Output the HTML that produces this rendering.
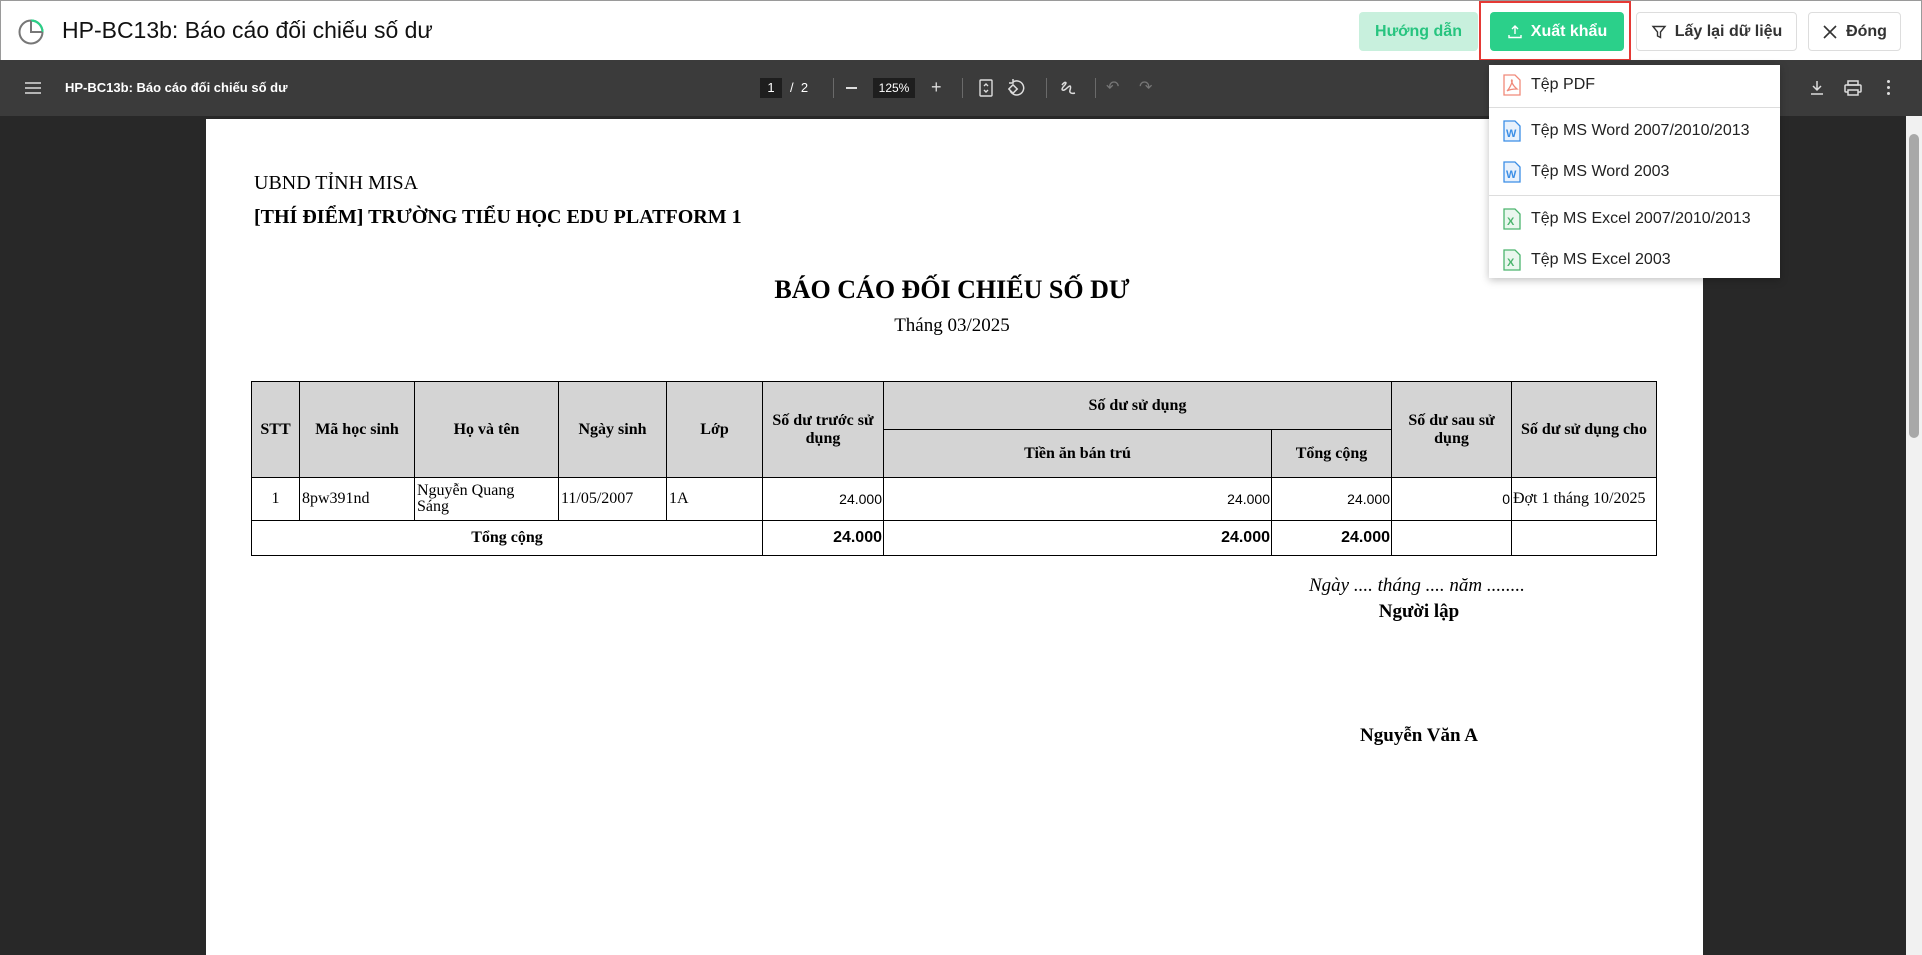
<!DOCTYPE html>
<html><head><meta charset="utf-8">
<style>
*{margin:0;padding:0;box-sizing:border-box}
body{width:1922px;height:955px;overflow:hidden;background:#fff;font-family:"Liberation Sans",sans-serif;position:relative}
.a{position:absolute}
.hdr{left:0;top:0;width:1922px;height:60px;background:#fff;border:1px solid #9a9a9a;border-bottom:none}
.btn{position:absolute;top:11px;height:39px;border-radius:4px;font-size:16px;font-weight:bold;display:flex;align-items:center;justify-content:center;gap:8px}
.tb{left:0;top:60px;width:1922px;height:56px;background:#3b3b3b;color:#fff}
.dark{left:0;top:116px;width:1906px;height:839px;background:#282828}
.page{left:206px;top:119px;width:1497px;height:836px;background:#fff;font-family:"Liberation Serif",serif;color:#000}
.sep{position:absolute;top:18px;width:1px;height:20px;background:#6a6a6a}
table{position:absolute;left:45px;top:262px;border-collapse:collapse;font-family:"Liberation Serif",serif}
td,th{border:1.5px solid #000;font-size:16px;padding:0 2px}
th{background:#d4d4d4;font-weight:bold}
.n{font-family:"Liberation Sans",sans-serif;font-size:14px;text-align:right;padding:0 1px}
.dd{left:1489px;top:65px;width:291px;height:213px;background:#fff;box-shadow:0 2px 8px rgba(0,0,0,.25);font-size:16px;color:#222}
.it{position:absolute;left:14px;display:flex;align-items:center;gap:10px}
</style></head><body>
<div class="a hdr">
  <svg class="a" style="left:16px;top:17px" width="28" height="28" viewBox="0 0 28 28"><circle cx="14" cy="14" r="11.5" fill="none" stroke="#777" stroke-width="2"/><path d="M14 2.5 A11.5 11.5 0 0 1 25.5 14" fill="none" stroke="#2bcf87" stroke-width="2.2"/><path d="M14 3v11h11" fill="none" stroke="#777" stroke-width="2"/></svg>
  <div class="a" style="left:61px;top:16px;font-size:23px;color:#111">HP-BC13b: Báo cáo đối chiếu số dư</div>
  <div class="btn" style="left:1358px;width:119px;background:#c8f0dd;color:#27c47f">Hướng dẫn</div>
  <div class="a" style="left:1478px;top:0;width:152px;height:60px;border:2px solid #e53935"></div>
  <div class="btn" style="left:1489px;width:134px;background:#2bd08a;color:#fff"><svg width="16" height="16" viewBox="0 0 16 16" fill="none" stroke="#fff" stroke-width="1.4"><path d="M8 2v8M5 5l3-3 3 3M2 11v2.5h12V11"/></svg>Xuất khẩu</div>
  <div class="btn" style="left:1635px;width:161px;border:1px solid #ddd;color:#333;font-weight:600"><svg width="16" height="16" viewBox="0 0 16 16" fill="none" stroke="#333" stroke-width="1.4"><path d="M2 2.5h12L9.5 8v5.5l-3-1.5V8z"/></svg>Lấy lại dữ liệu</div>
  <div class="btn" style="left:1807px;width:93px;border:1px solid #ddd;color:#333;font-weight:600"><svg width="16" height="16" viewBox="0 0 16 16" stroke="#333" stroke-width="1.6"><path d="M2 2l12 12M14 2L2 14"/></svg>Đóng</div>
</div>
<div class="a tb">
  <svg class="a" style="left:25px;top:22px" width="16" height="12"><path d="M0 1h16M0 6h16M0 11h16" stroke="#ddd" stroke-width="1.6"/></svg>
  <div class="a" style="left:65px;top:20px;font-size:13px;font-weight:bold">HP-BC13b: Báo cáo đối chiếu số dư</div>
  <div class="a" style="left:760px;top:18px;width:22px;height:20px;background:#1e1e1e;font-size:13px;text-align:center;line-height:20px">1</div>
  <div class="a" style="left:790px;top:20px;font-size:13px">/&nbsp; 2</div>
  <div class="sep" style="left:833px"></div>
  <div class="a" style="left:846px;top:27px;width:11px;height:2px;background:#ddd"></div>
  <div class="a" style="left:873px;top:18px;width:42px;height:20px;background:#1e1e1e;font-size:12px;text-align:center;line-height:20px">125%</div>
  <div class="a" style="left:931px;top:17px;font-size:18px;color:#ddd">+</div>
  <div class="sep" style="left:962px"></div>
  <svg class="a" style="left:979px;top:19px" width="14" height="18" fill="none" stroke="#ddd" stroke-width="1.4"><rect x="1" y="1" width="12" height="16" rx="1"/><path d="M5 7l2-2 2 2M5 11l2 2 2-2"/></svg>
  <svg class="a" style="left:1008px;top:19px" width="18" height="18" fill="none" stroke="#ddd" stroke-width="1.5"><path d="M5 3a7 7 0 1 1-3 8"/><path d="M5 0v4h-4" /><rect x="2" y="7" width="6" height="6" transform="rotate(45 5 10)"/></svg>
  <div class="sep" style="left:1046px"></div>
  <svg class="a" style="left:1060px;top:19px" width="18" height="18" fill="none" stroke="#ddd" stroke-width="1.5"><path d="M2 6c3-4 6-3 2 1s-1 6 3 2 4-1 3 2 2 4 5 3"/></svg>
  <div class="sep" style="left:1095px"></div>
  <div class="a" style="left:1106px;top:17px;font-size:16px;color:#777">↶</div>
  <div class="a" style="left:1139px;top:17px;font-size:16px;color:#777">↷</div>
  <svg class="a" style="left:1809px;top:20px" width="16" height="16" fill="none" stroke="#ddd" stroke-width="1.5"><path d="M8 1v9M4 6l4 4 4-4M2 14h12"/></svg>
  <svg class="a" style="left:1844px;top:20px" width="18" height="16" fill="none" stroke="#ddd" stroke-width="1.5"><rect x="4" y="1" width="10" height="4"/><rect x="1" y="5" width="16" height="7" rx="1"/><rect x="4" y="10" width="10" height="5" fill="#3b3b3b"/></svg>
  <div class="a" style="left:1887px;top:20px;width:3px;height:3px;background:#ddd;box-shadow:0 6px #ddd,0 12px #ddd;border-radius:50%"></div>
</div>
<div class="a dark"></div>
<div class="a" style="left:1906px;top:116px;width:16px;height:839px;background:#f1f1f1"></div>
<div class="a" style="left:1909px;top:134px;width:10px;height:304px;background:#a8a8a8;border-radius:5px"></div>
<div class="a page">
  <div class="a" style="left:48px;top:53px;font-size:20px">UBND TỈNH MISA</div>
  <div class="a" style="left:48px;top:87px;font-size:20px;font-weight:bold">[THÍ ĐIỂM] TRƯỜNG TIỂU HỌC EDU PLATFORM 1</div>
  <div class="a" style="left:0;width:1492px;top:156px;font-size:26px;font-weight:bold;text-align:center">BÁO CÁO ĐỐI CHIẾU SỐ DƯ</div>
  <div class="a" style="left:0;width:1492px;top:196px;font-size:19px;text-align:center">Tháng 03/2025</div>
  <table>
    <colgroup><col style="width:48px"><col style="width:115px"><col style="width:144px"><col style="width:108px"><col style="width:96px"><col style="width:121px"><col style="width:388px"><col style="width:120px"><col style="width:120px"><col style="width:145px"></colgroup>
    <tr style="height:48px"><th rowspan="2">STT</th><th rowspan="2">Mã học sinh</th><th rowspan="2">Họ và tên</th><th rowspan="2">Ngày sinh</th><th rowspan="2">Lớp</th><th rowspan="2">Số dư trước sử dụng</th><th colspan="2">Số dư sử dụng</th><th rowspan="2">Số dư sau sử dụng</th><th rowspan="2">Số dư sử dụng cho</th></tr>
    <tr style="height:48px"><th>Tiền ăn bán trú</th><th>Tổng cộng</th></tr>
    <tr style="height:43px"><td style="text-align:center">1</td><td>8pw391nd</td><td style="line-height:16px">Nguyễn Quang<br>Sáng</td><td>11/05/2007</td><td>1A</td><td class="n">24.000</td><td class="n">24.000</td><td class="n">24.000</td><td class="n">0</td><td style="padding:0 1px">Đợt 1 tháng 10/2025</td></tr>
    <tr style="height:35px"><td colspan="5" style="text-align:center;font-weight:bold">Tổng cộng</td><td class="n" style="font-weight:bold;font-size:16px">24.000</td><td class="n" style="font-weight:bold;font-size:16px">24.000</td><td class="n" style="font-weight:bold;font-size:16px">24.000</td><td></td><td></td></tr>
  </table>
  <div class="a" style="left:1103px;top:456px;font-size:19px;font-style:italic">Ngày .... tháng .... năm ........</div>
  <div class="a" style="left:1113px;width:200px;top:482px;font-size:19px;font-weight:bold;text-align:center">Người lập</div>
  <div class="a" style="left:1113px;width:200px;top:606px;font-size:19px;font-weight:bold;text-align:center">Nguyễn Văn A</div>
</div>
<div class="a dd">
  <div class="it" style="top:9px"><svg width="18" height="22" viewBox="0 0 18 22" fill="none" stroke="#f08a7a" stroke-width="1.3"><path d="M1 1h11l5 5v15H1z"/><path d="M4 17c3-3 6-10 5-11s-1 4 5 9c-3 0-7 0-10 2z"/></svg>Tệp PDF</div>
  <div class="a" style="left:0;top:42px;width:291px;height:1px;background:#ddd"></div>
  <div class="it" style="top:55px"><svg width="18" height="22" viewBox="0 0 18 22"><path d="M1 1h11l5 5v15H1z" fill="#e8f1fc" stroke="#3b8ee6" stroke-width="1.3"/><text x="3" y="17" font-size="11" font-weight="bold" fill="#3b8ee6" font-family="Liberation Sans">W</text></svg>Tệp MS Word 2007/2010/2013</div>
  <div class="it" style="top:96px"><svg width="18" height="22" viewBox="0 0 18 22"><path d="M1 1h11l5 5v15H1z" fill="#e8f1fc" stroke="#3b8ee6" stroke-width="1.3"/><text x="3" y="17" font-size="11" font-weight="bold" fill="#3b8ee6" font-family="Liberation Sans">W</text></svg>Tệp MS Word 2003</div>
  <div class="a" style="left:0;top:130px;width:291px;height:1px;background:#ddd"></div>
  <div class="it" style="top:143px"><svg width="18" height="22" viewBox="0 0 18 22"><path d="M1 1h11l5 5v15H1z" fill="#eaf7ee" stroke="#4cb56e" stroke-width="1.3"/><text x="4" y="17" font-size="11" font-weight="bold" fill="#4cb56e" font-family="Liberation Sans">X</text></svg>Tệp MS Excel 2007/2010/2013</div>
  <div class="it" style="top:184px"><svg width="18" height="22" viewBox="0 0 18 22"><path d="M1 1h11l5 5v15H1z" fill="#eaf7ee" stroke="#4cb56e" stroke-width="1.3"/><text x="4" y="17" font-size="11" font-weight="bold" fill="#4cb56e" font-family="Liberation Sans">X</text></svg>Tệp MS Excel 2003</div>
</div>
</body></html>
